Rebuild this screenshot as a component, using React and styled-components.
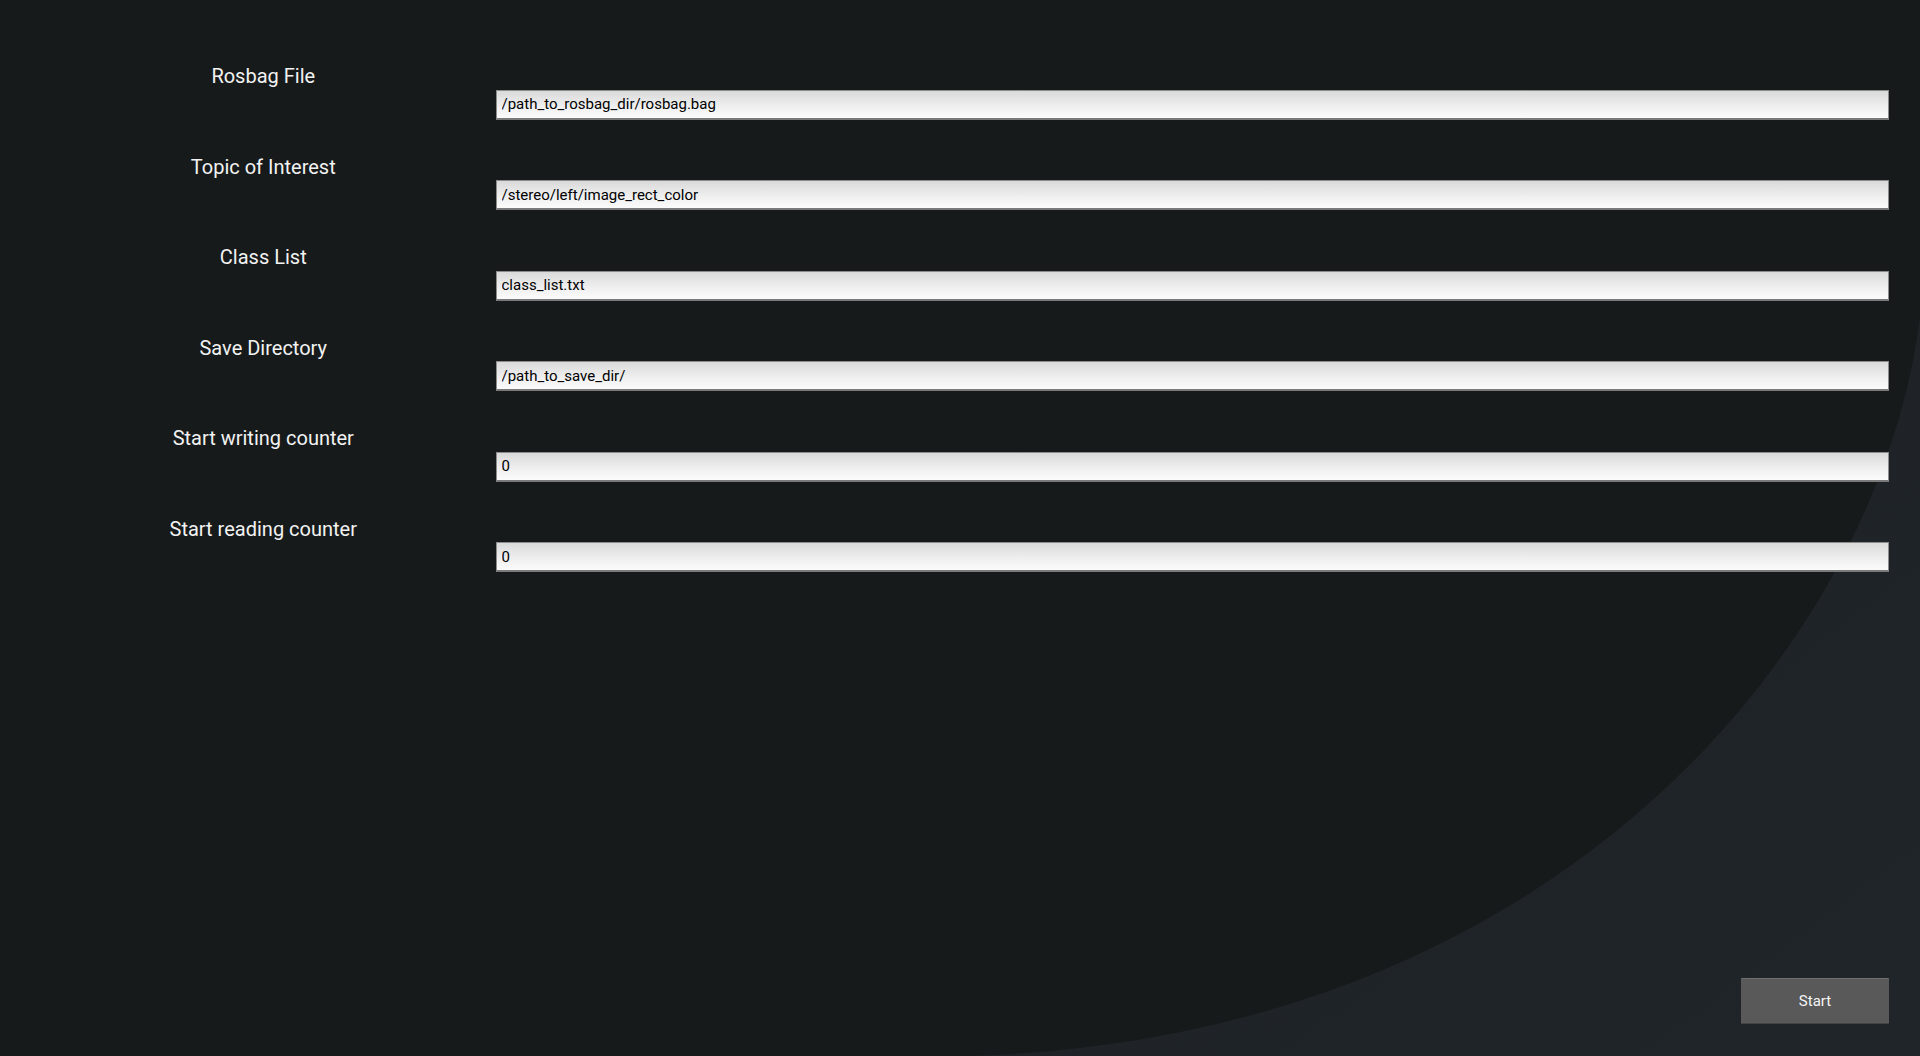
import React from "react";
import styled, { createGlobalStyle } from "styled-components";

const GlobalStyle = createGlobalStyle`
  html, body {
    margin: 0;
    padding: 0;
    height: 100%;
  }
  body {
    font-family: Roboto, "Liberation Sans", sans-serif;
    background: #171a1b;
  }
`;

const Screen = styled.div`
  position: relative;
  width: 1920px;
  height: 1056px;
  box-sizing: border-box;
  padding: 31px 31px 32px 31px;
  display: flex;
  flex-direction: column;
  background: #171a1b;
  overflow: hidden;
`;

// decorative curved backdrop sitting under the form
const Backdrop = styled.svg`
  position: absolute;
  left: 0;
  top: 0;
  width: 1920px;
  height: 1056px;
  z-index: 0;
  pointer-events: none;
`;

const Content = styled.div`
  position: relative;
  z-index: 1;
  flex: 1;
  display: flex;
  flex-direction: column;
`;

const Form = styled.div`
  display: grid;
  grid-template-columns: 464.5px 1fr;
  grid-auto-rows: 90.5px;
`;

const Label = styled.div`
  display: flex;
  align-items: center;
  justify-content: center;
  font-size: 20px;
  color: #f2f2f2;
`;

const Field = styled.div`
  display: flex;
  align-items: flex-end;
  padding-bottom: 2px;
`;

const Input = styled.input`
  width: 100%;
  height: 30px;
  box-sizing: border-box;
  margin: 0;
  padding: 0 5px;
  font-family: Roboto, "Liberation Sans", sans-serif;
  font-size: 15px;
  color: #000;
  background: linear-gradient(to bottom, #dadada 0%, #f0f0f0 60%, #fbfbfb 100%);
  border: 1px solid #8c8c8c;
  border-bottom: 2px solid #7a7a7a;
  border-radius: 0;
  outline: none;
`;

const Footer = styled.div`
  margin-top: auto;
  display: flex;
  justify-content: flex-end;
`;

const Button = styled.button`
  width: 148px;
  height: 46px;
  box-sizing: border-box;
  font-family: Roboto, "Liberation Sans", sans-serif;
  font-size: 15px;
  color: #f4f4f4;
  background: #595959;
  border: none;
  border-top: 1px solid #707070;
  border-bottom: 1px solid #444;
  border-radius: 1px;
  cursor: pointer;
`;

const fields = [
  { label: "Rosbag File", value: "/path_to_rosbag_dir/rosbag.bag" },
  { label: "Topic of Interest", value: "/stereo/left/image_rect_color" },
  { label: "Class List", value: "class_list.txt" },
  { label: "Save Directory", value: "/path_to_save_dir/" },
  { label: "Start writing counter", value: "0" },
  { label: "Start reading counter", value: "0" },
];

export default function App() {
  return (
    <>
      <GlobalStyle />
      <Screen>
        <Backdrop viewBox="0 0 1920 1056">
          <defs>
            <linearGradient id="lit" x1="0" y1="0" x2="1" y2="1">
              <stop offset="0" stopColor="#1d2124" />
              <stop offset="1" stopColor="#20252a" />
            </linearGradient>
          </defs>
          <path
            d="M1920,318 C1880,640 1560,1040 967,1056 L1920,1056 Z"
            fill="url(#lit)"
          />
        </Backdrop>
        <Content>
          <Form>
            {fields.map((f) => (
              <React.Fragment key={f.label}>
                <Label>{f.label}</Label>
                <Field>
                  <Input defaultValue={f.value} />
                </Field>
              </React.Fragment>
            ))}
          </Form>
          <Footer>
            <Button>Start</Button>
          </Footer>
        </Content>
      </Screen>
    </>
  );
}
